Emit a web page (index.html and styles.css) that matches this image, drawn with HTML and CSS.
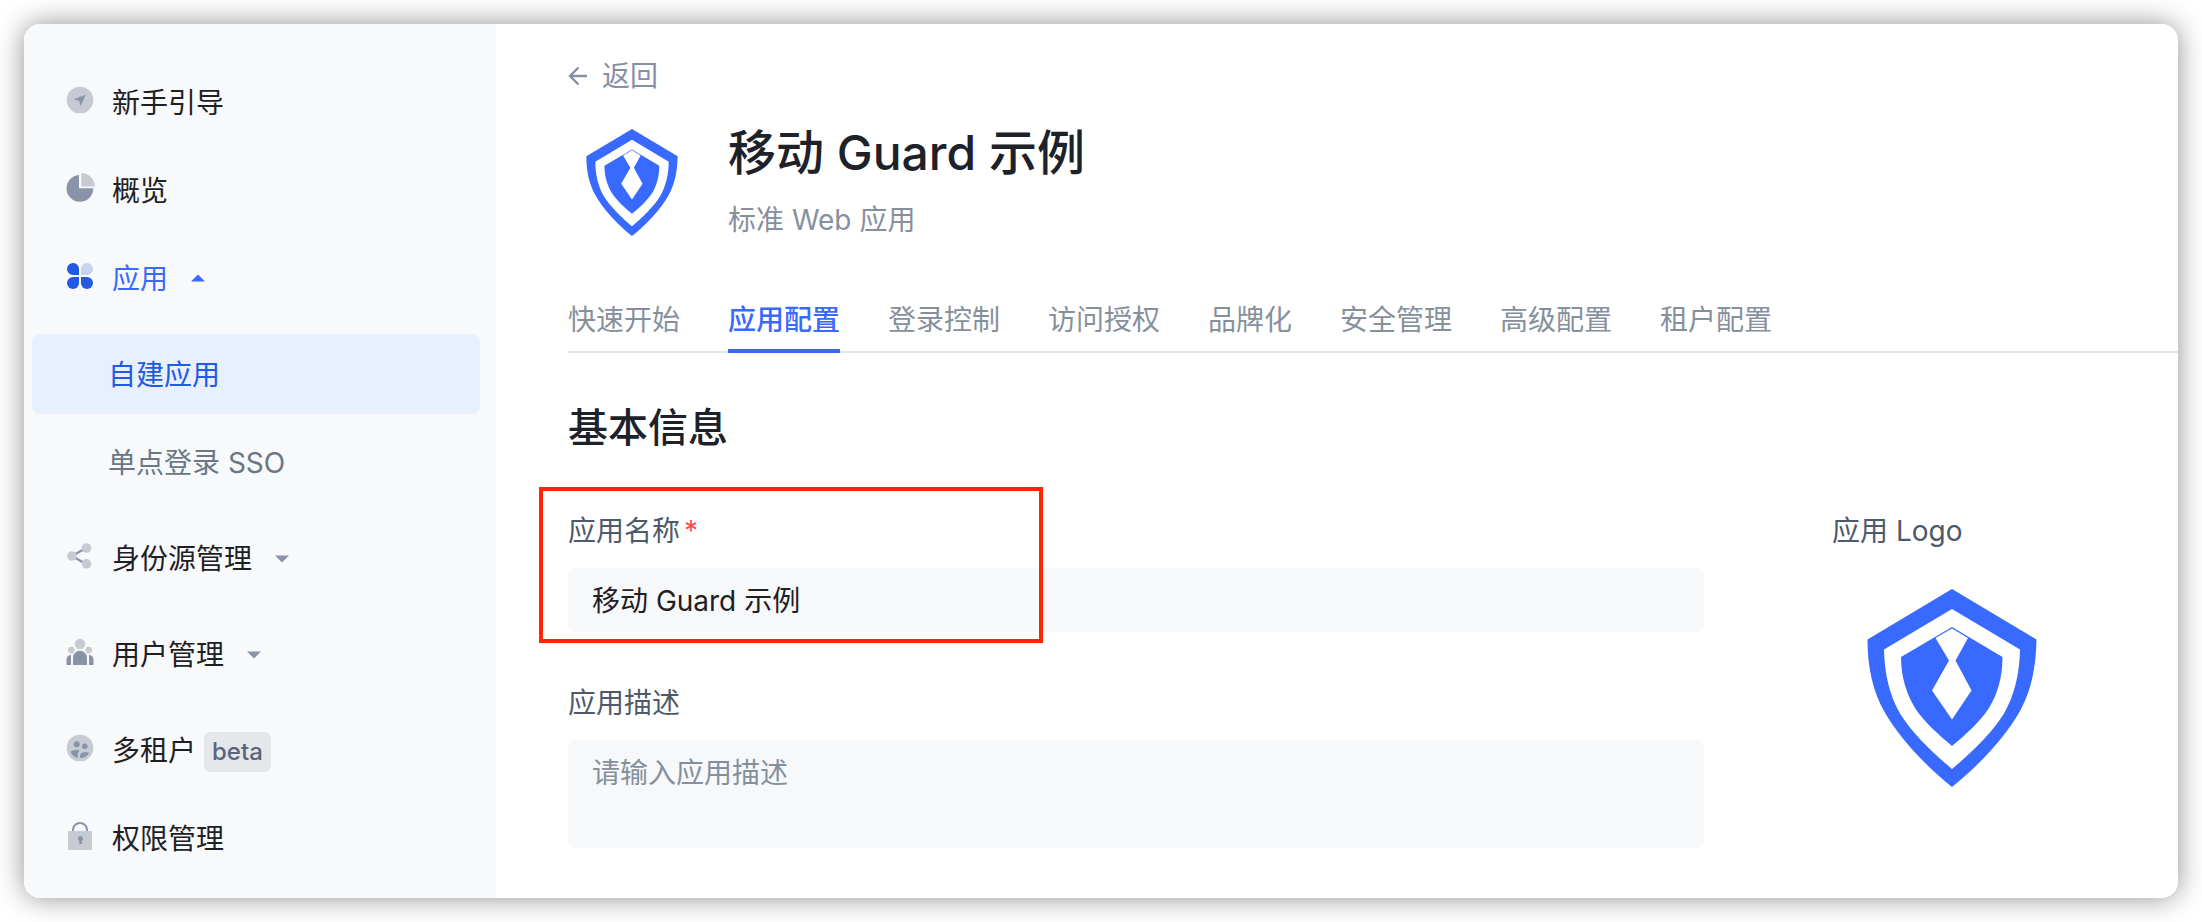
FILE: index.html
```html
<!DOCTYPE html>
<html lang="zh-CN">
<head>
<meta charset="utf-8">
<meta name="viewport" content="width=device-width, initial-scale=1">
<title>移动 Guard 示例</title>
<link rel="stylesheet" href="styles.css">
</head>
<body>
<svg class="sprite" aria-hidden="true">
  <symbol id="shield" viewBox="0 0 170 198">
    <path fill="#396aff" fill-rule="evenodd" d="M85 0 169.500 50.500C169 80 163.500 103 153 122 138 149 111 177 85 198 59 177 32 149 17 122 6.500 103 .500 80 .500 50.500ZM85 20 17 60.500C17.500 86 23 107 33 124.500 45 144 66 164 85 180 104 164 125 144 137 124.500 147 107 152.500 86 153 60.500Z"/>
    <path fill="#396aff" d="M85 38 135.500 68C135.500 88 130.500 105 122 119 113 133 98 146 85 157 72 146 57 133 48 119 39.500 105 34 88 34 68Z"/>
    <path fill="#fff" d="M85 39.500 101 49 88.500 71.500 104.500 101.500 85 130.500 65 101.500 82 71.500 68.500 49Z"/>
  </symbol>
</svg>
<div class="window">
  <aside class="sidebar">
    <nav aria-label="主导航">
      <ul class="menu">
        <li>
          <a class="menu-item" href="#guide">
            <svg class="menu-icon" viewBox="0 0 28 28"><circle cx="14" cy="14" r="13.300" fill="#c6cad3"/><path d="M19.500 8.800 7.500 13.200 13.200 15 14.700 20.200Z" fill="#8a93a8"/></svg>
            新手引导
          </a>
        </li>
        <li>
          <a class="menu-item" href="#overview">
            <svg class="menu-icon" viewBox="0 0 28 28"><path d="M13 1v13.300h14.300A13.400 13.400 0 1 1 13 1Z" fill="#8a93a8"/><path d="M15.300 -1A14 14 0 0 1 29 12.500H15.300Z" fill="#c6cad3"/></svg>
            概览
          </a>
        </li>
        <li class="expandable">
          <a class="menu-item current" href="#apps">
            <svg class="menu-icon" viewBox="0 0 28 28"><g fill="#225ae6"><path d="M7 1a5.800 5.800 0 0 1 6 6v6H7A6 6 0 0 1 7 1Z"/><path d="M7 15h6v6a6 6 0 1 1-6-6Z"/><path d="M15 15h6a6 6 0 1 1-6 6Z"/></g><path d="M21 1a6 6 0 0 1 0 12h-6V7a6 6 0 0 1 6-6Z" fill="#c8d3f0"/></svg>
            应用
            <svg class="caret" viewBox="0 0 14 8"><path d="M0 7.500 7 .500l7 7Z"/></svg>
          </a>
          <ul class="submenu">
            <li><a class="submenu-item selected" href="#own">自建应用</a></li>
            <li><a class="submenu-item" href="#sso">单点登录 SSO</a></li>
          </ul>
        </li>
        <li class="expandable">
          <a class="menu-item" href="#identity">
            <svg class="menu-icon" viewBox="0 0 28 28"><path d="M20 6 6 14l14 8" fill="none" stroke="#8a93a8" stroke-width="2.400"/><g fill="#c6cad3"><circle cx="20.500" cy="6" r="4.800"/><circle cx="6" cy="14" r="4.800"/><circle cx="20.500" cy="21.800" r="4.800"/></g></svg>
            身份源管理
            <svg class="caret" viewBox="0 0 14 8"><path d="M0 .500 7 7.500l7-7Z"/></svg>
          </a>
        </li>
        <li class="expandable">
          <a class="menu-item" href="#users">
            <svg class="menu-icon" viewBox="0 0 28 28"><g fill="#c6cad3"><circle cx="14" cy="6" r="5.300"/><circle cx="5.300" cy="12" r="3.300"/><circle cx="22.700" cy="12" r="3.300"/></g><g fill="#8a93a8"><path d="M7 27v-7.300a7 7 0 0 1 14 0V27Z"/><path d="M.500 27v-5.500c0-2.700 1.700-4.500 4.500-4.500V27Z"/><path d="M27.500 27v-5.500c0-2.700-1.700-4.500-4.500-4.500V27Z"/></g></svg>
            用户管理
            <svg class="caret" viewBox="0 0 14 8"><path d="M0 .500 7 7.500l7-7Z"/></svg>
          </a>
        </li>
        <li>
          <a class="menu-item" href="#tenants">
            <svg class="menu-icon" viewBox="0 0 28 28"><circle cx="14" cy="14" r="13.300" fill="#c6cad3"/><g fill="#8a93a8"><circle cx="10.700" cy="10.300" r="3"/><circle cx="18.800" cy="12.200" r="2.700"/><path d="M4.500 17.500c2.500-1.500 6-2 9-1.200-1.300 1.700-2 4.200-1.800 7.700-3.500-.800-6-3-7.200-6.500Z"/><path d="M14 24c-.300-3 1-5.500 4-5.700 2-.200 4-.100 5.300.400-1.800 3.300-5 5.500-9.300 5.300Z"/></g></svg>
            多租户
            <span class="badge">beta</span>
          </a>
        </li>
        <li>
          <a class="menu-item" href="#permissions">
            <svg class="menu-icon" viewBox="0 0 28 28"><path d="M7 10.500V8a7 7 0 0 1 14 0v2.500" fill="none" stroke="#8a93a8" stroke-width="2"/><rect x="2" y="9" width="24" height="19" rx="1" fill="#c6cad3"/><path d="M14.500 14a2.700 2.700 0 0 1 1.300 5v3h-2.600v-3a2.700 2.700 0 0 1 1.300-5Z" fill="#8a93a8"/></svg>
            权限管理
          </a>
        </li>
      </ul>
    </nav>
  </aside>
  <main class="main">
    <a class="back" href="#back">
      <svg class="back-icon" viewBox="0 0 20 20"><path d="M19 10H2M10.500 1.500 2 10l8.500 8.500" fill="none" stroke="currentColor" stroke-width="2.400"/></svg>
      返回
    </a>
    <header class="app-header">
      <div class="app-logo"><svg class="shield-small" role="img" aria-label="应用图标"><use href="#shield"/></svg></div>
      <div class="app-text">
        <h1 class="app-title">移动 Guard 示例</h1>
        <p class="app-type">标准 Web 应用</p>
      </div>
    </header>
    <nav class="tabs" aria-label="应用设置">
      <a class="tab" href="#t1">快速开始</a>
      <a class="tab active" href="#t2" aria-current="page">应用配置</a>
      <a class="tab" href="#t3">登录控制</a>
      <a class="tab" href="#t4">访问授权</a>
      <a class="tab" href="#t5">品牌化</a>
      <a class="tab" href="#t6">安全管理</a>
      <a class="tab" href="#t7">高级配置</a>
      <a class="tab" href="#t8">租户配置</a>
    </nav>
    <h2 class="section-title">基本信息</h2>
    <form class="form">
      <div class="fields">
        <div class="field highlighted">
          <label class="label" for="app-name">应用名称<span class="required">*</span></label>
          <input class="control" id="app-name" type="text" value="移动 Guard 示例">
        </div>
        <div class="field">
          <label class="label" for="app-desc">应用描述</label>
          <textarea class="control area" id="app-desc" placeholder="请输入应用描述"></textarea>
        </div>
      </div>
      <div class="logo-field">
        <span class="label">应用 Logo</span>
        <svg class="shield-large" role="img" aria-label="应用 Logo"><use href="#shield"/></svg>
      </div>
    </form>
  </main>
</div>
</body>
</html>
```
FILE: styles.css
```css
*,
*::before,
*::after {
  box-sizing: border-box;
}

body {
  display: flex;
  min-height: 100vh;
  margin: 0;
  padding: 24px;
  background: #fff;
  color: #1f2023;
  font-family: Inter, "Noto Sans CJK SC", sans-serif;
  font-size: 28px;
  line-height: 40px;
}

h1, h2, p, ul {
  margin: 0;
  padding: 0;
}

ul {
  list-style: none;
}

a {
  color: inherit;
  text-decoration: none;
}

svg {
  flex: none;
  overflow: visible;
}

.sprite {
  position: absolute;
  width: 0;
  height: 0;
}

.window {
  display: flex;
  flex: 1;
  min-width: 0;
  overflow: hidden;
  border-radius: 16px;
  background: #fff;
  box-shadow: 0 0 28px rgba(0, 0, 0, 0.44);
}

.sidebar {
  flex: none;
  width: 472px;
  padding: 38px 16px 20px 8px;
  background: #f7f9fb;
}

.menu,
.submenu {
  display: flex;
  flex-direction: column;
  gap: 8px;
}

.submenu {
  margin-top: 16px;
}

.expandable {
  margin-bottom: 8px;
}

.menu-item,
.submenu-item {
  display: flex;
  align-items: center;
  height: 80px;
  padding-top: 2px;
  border-radius: 8px;
  white-space: nowrap;
}

.menu-item {
  padding-left: 34px;
}

.menu-icon {
  width: 28px;
  height: 28px;
  margin: 0 18px 6px 0;
}

.caret {
  width: 14px;
  height: 8px;
  margin-left: 23px;
  fill: #8a93a8;
}

.current {
  color: #396aff;
}

.current .caret {
  margin-bottom: 2px;
  fill: #396aff;
}

.submenu-item {
  padding-left: 76px;
  color: #6b7785;
}

.selected {
  background: #e8effe;
  color: #215ae5;
}

.badge {
  margin: 2px 0 0 8px;
  padding: 0 8px;
  border-radius: 6px;
  background: #e6e7ea;
  color: #5b647a;
  font-size: 24px;
  font-weight: 500;
}

.main {
  flex: 1;
  min-width: 0;
  padding: 32px 0 50px 72px;
}

.back {
  display: inline-flex;
  align-items: center;
  gap: 14px;
  color: #868fa5;
}

.back-icon {
  width: 20px;
  height: 20px;
}

.app-header {
  display: flex;
  gap: 32px;
  margin-top: 22px;
}

.app-logo {
  display: flex;
  align-items: center;
  justify-content: center;
  width: 128px;
  height: 128px;
}

.shield-small {
  width: 92px;
  height: 107px;
}

.app-text {
  padding-top: 3px;
}

.app-title {
  font-size: 48px;
  font-weight: 500;
  line-height: 64px;
  color: #1d2129;
}

.app-type {
  margin-top: 15px;
  color: #86909c;
}

.tabs {
  display: flex;
  gap: 48px;
  margin-top: 54px;
  box-shadow: inset 0 -2px #e5e6eb;
}

.tab {
  padding-bottom: 9px;
  border-bottom: 4px solid transparent;
  color: #86909c;
  white-space: nowrap;
}

.active {
  border-color: #396aff;
  color: #396aff;
  font-weight: 500;
}

.section-title {
  margin-top: 47px;
  color: #1d2129;
  font-size: 40px;
  font-weight: 500;
  line-height: 56px;
}

.form {
  display: grid;
  grid-template-columns: 1fr 240px;
  gap: 128px;
  margin-top: 55px;
  padding-right: 106px;
}

.fields {
  display: flex;
  flex-direction: column;
  gap: 51px;
}

.field {
  display: flex;
  flex-direction: column;
  gap: 17px;
}

.highlighted {
  position: relative;
}

.highlighted::after {
  content: "";
  position: absolute;
  top: -24px;
  bottom: -11px;
  left: -29px;
  width: 504px;
  border: 4px solid #ff2600;
  pointer-events: none;
}

.label {
  color: #4e5969;
}

.required {
  margin-left: 4px;
  color: #ff4d4f;
}

.control {
  width: 100%;
  height: 64px;
  padding: 11px 24px 13px;
  border: 0;
  border-radius: 8px;
  outline: 0;
  background: #f7f8fa;
  color: #1f2023;
  font: inherit;
}

.area {
  display: block;
  height: 108px;
  padding-top: 13px;
  resize: none;
}

.control::placeholder {
  color: #86909c;
}

.logo-field {
  display: flex;
  flex-direction: column;
  gap: 38px;
}

.shield-large {
  align-self: center;
  width: 170px;
  height: 198px;
}
```
